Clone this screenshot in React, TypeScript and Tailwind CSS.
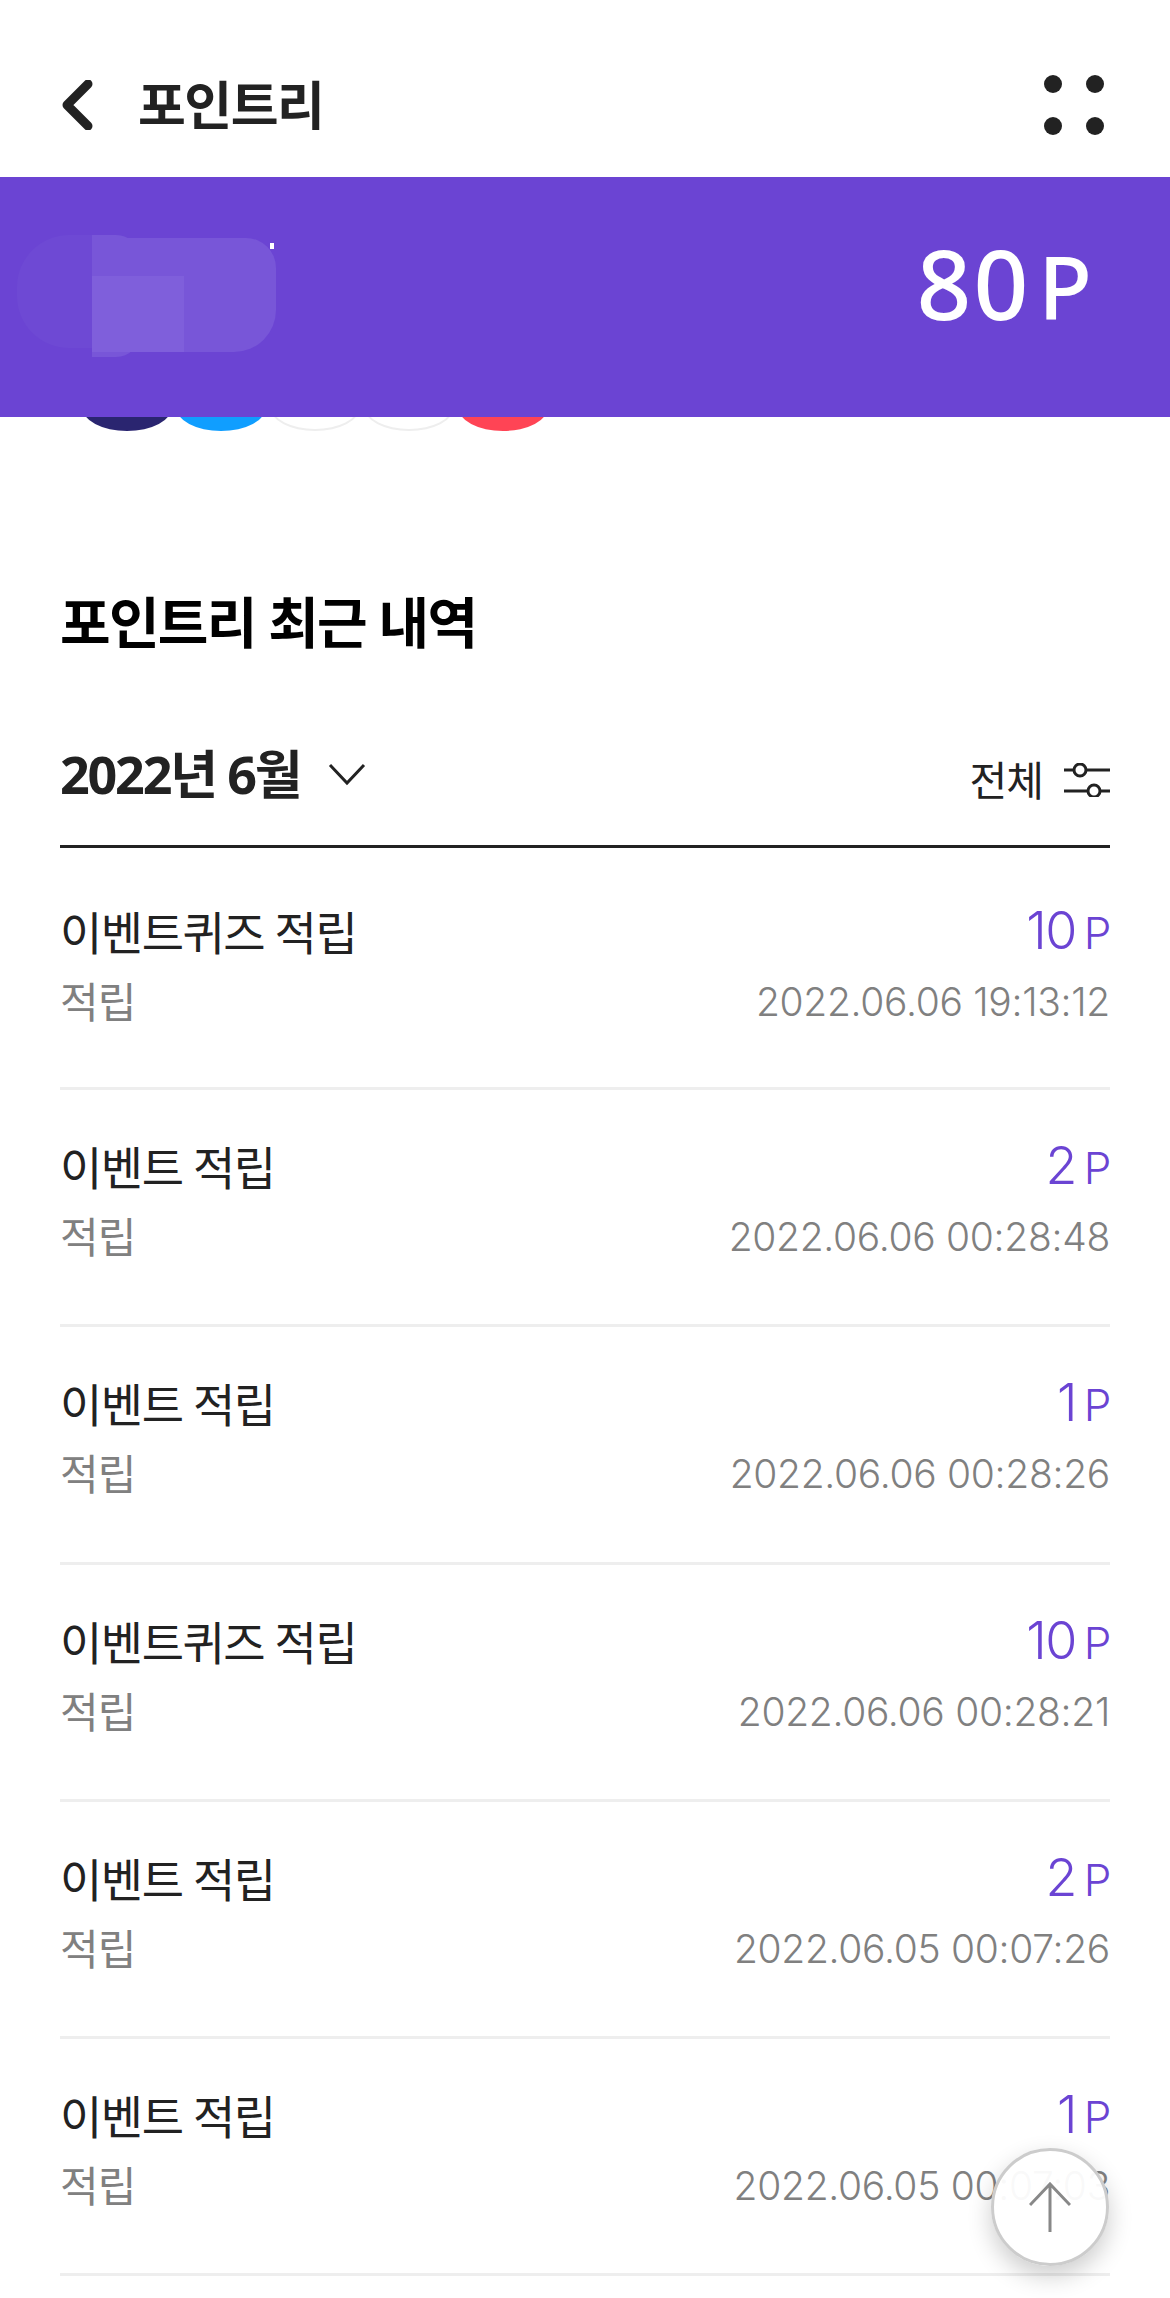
const kr = "font-['Noto_Sans','Noto_Sans_CJK_KR',sans-serif]";
const num = "font-['Inter','Noto_Sans_CJK_KR',sans-serif]";

const rows = [
  ["이벤트퀴즈 적립", "10", "2022.06.06 19:13:12"],
  ["이벤트 적립", "2", "2022.06.06 00:28:48"],
  ["이벤트 적립", "1", "2022.06.06 00:28:26"],
  ["이벤트퀴즈 적립", "10", "2022.06.06 00:28:21"],
  ["이벤트 적립", "2", "2022.06.05 00:07:26"],
  ["이벤트 적립", "1", "2022.06.05 00:07:03"],
];

const dots = ["bg-[#2a2570]", "bg-[#109eff]", "bg-white border-[2px] border-[#eeeeee]", "bg-white border-[2px] border-[#eeeeee]", "bg-[#ff4455]"];

export default function App() {
  return (
    <div className={`relative w-[1170px] h-[2298px] overflow-hidden bg-white ${kr}`}>
      <header className="h-[177px] flex items-center justify-between pl-[60px] pr-[66px] pt-[33px]">
        <div className="flex items-center gap-[44px]">
          <svg width="34" height="50" viewBox="0 0 34 50">
            <path d="M28 4 L7 25 L28 46" fill="none" stroke="#222" strokeWidth="9" strokeLinecap="round" strokeLinejoin="round" />
          </svg>
          <span className="text-[52px] leading-[60px] font-bold text-[#222] tracking-[-1.5px]">포인트리</span>
        </div>
        <div className="grid grid-cols-2 gap-[24px]">
          {[0, 1, 2, 3].map((i) => (
            <span key={i} className="w-[18px] h-[18px] rounded-full bg-[#222]" />
          ))}
        </div>
      </header>

      <section className="relative z-10 h-[240px] bg-[#6b44d3] flex items-center justify-end pr-[76px] pb-[30px]">
        <span className="text-white text-[96px] leading-none font-medium pt-[2px] tracking-[2px]">
          80<span className="text-[88px] ml-[8px]">P</span>
        </span>
        <div className="absolute left-[17px] top-[58px] w-[75px] h-[113px] rounded-l-[52px] bg-[#6e49d4]" />
        <div className="absolute left-[92px] top-[58px] w-[48px] h-[122px] rounded-r-[24px] bg-[#7856d8]" />
        <div className="absolute left-[92px] top-[61px] w-[184px] h-[114px] rounded-tr-[30px] rounded-br-[42px] bg-[#7856d8]" />
        <div className="absolute left-[92px] top-[99px] w-[92px] h-[76px] bg-[#7f5fdb]" />
        <div className="absolute left-[270px] top-[66px] w-[4px] h-[6px] bg-white" />
      </section>

      <div className="flex gap-[4px] pl-[82px] -mt-[34px]">
        {dots.map((c, i) => (
          <span key={i} className={`w-[90px] h-[48px] rounded-[50%] ${c}`} />
        ))}
      </div>

      <main className="px-[60px]">
        <h2 className="mt-[161px] text-[55px] leading-[60px] font-bold text-black tracking-[-1.7px]">포인트리 최근 내역</h2>
        <div className="mt-[91px] h-[62px] flex items-center justify-between">
          <div className="flex items-center gap-[28px]">
            <span className="text-[52px] leading-[60px] font-bold text-[#222] tracking-[-2.2px]">2022년 6월</span>
            <svg width="38" height="24" viewBox="0 0 38 24">
              <path d="M2 3 L19 21 L36 3" fill="none" stroke="#222" strokeWidth="3" />
            </svg>
          </div>
          <div className="flex items-center gap-[22px] pt-[12px]">
            <span className="text-[41px] leading-[50px] text-[#222] tracking-[-1px]">전체</span>
            <svg width="46" height="34" viewBox="0 0 46 34" className="-ml-[1px]">
              <g fill="none" stroke="#222" strokeWidth="3">
                <path d="M0 7 H10 M22 7 H46 M0 28 H24 M36 28 H46" />
                <circle cx="16" cy="7" r="6" />
                <circle cx="30" cy="28" r="6" />
              </g>
            </svg>
          </div>
        </div>
        <div className="mt-[40px] border-t-[3px] border-[#222]">
          {rows.map(([title, pts, date], i) => (
            <div
              key={i}
              className={`${i === 0 ? "h-[242px] pt-[54px]" : "h-[237.3px] pt-[47px]"} border-b-[3px] border-[#eeeeee] flex flex-col`}
            >
              <div className="flex items-center justify-between h-[60px]">
                <span className="text-[46px] leading-[60px] text-[#222] tracking-[-1.5px]">{title}</span>
                <span className={`${num} font-light text-[#6b44d3] text-[52px] leading-[60px] tracking-[-1.5px]`}>
                  {pts}<span className="text-[44px] ml-[8px]">P</span>
                </span>
              </div>
              <div className="flex items-center justify-between h-[50px] mt-[15px]">
                <span className="text-[42px] leading-[50px] text-[#808080] tracking-[-1px]">적립</span>
                <span className={`${num} font-light text-[39px] leading-[50px] text-[#808080] tracking-[-0.3px]`}>{date}</span>
              </div>
            </div>
          ))}
        </div>
      </main>

      <button className="absolute left-[991px] top-[2148px] w-[118px] h-[118px] rounded-full bg-white/95 border-[3px] border-[#cccccc] shadow-[0_10px_24px_rgba(0,0,0,0.2)] flex items-center justify-center">
        <svg width="42" height="50" viewBox="0 0 42 50">
          <path d="M21 2 V50 M1 23 L21 2 L41 23" fill="none" stroke="#888" strokeWidth="3" />
        </svg>
      </button>
    </div>
  );
}
